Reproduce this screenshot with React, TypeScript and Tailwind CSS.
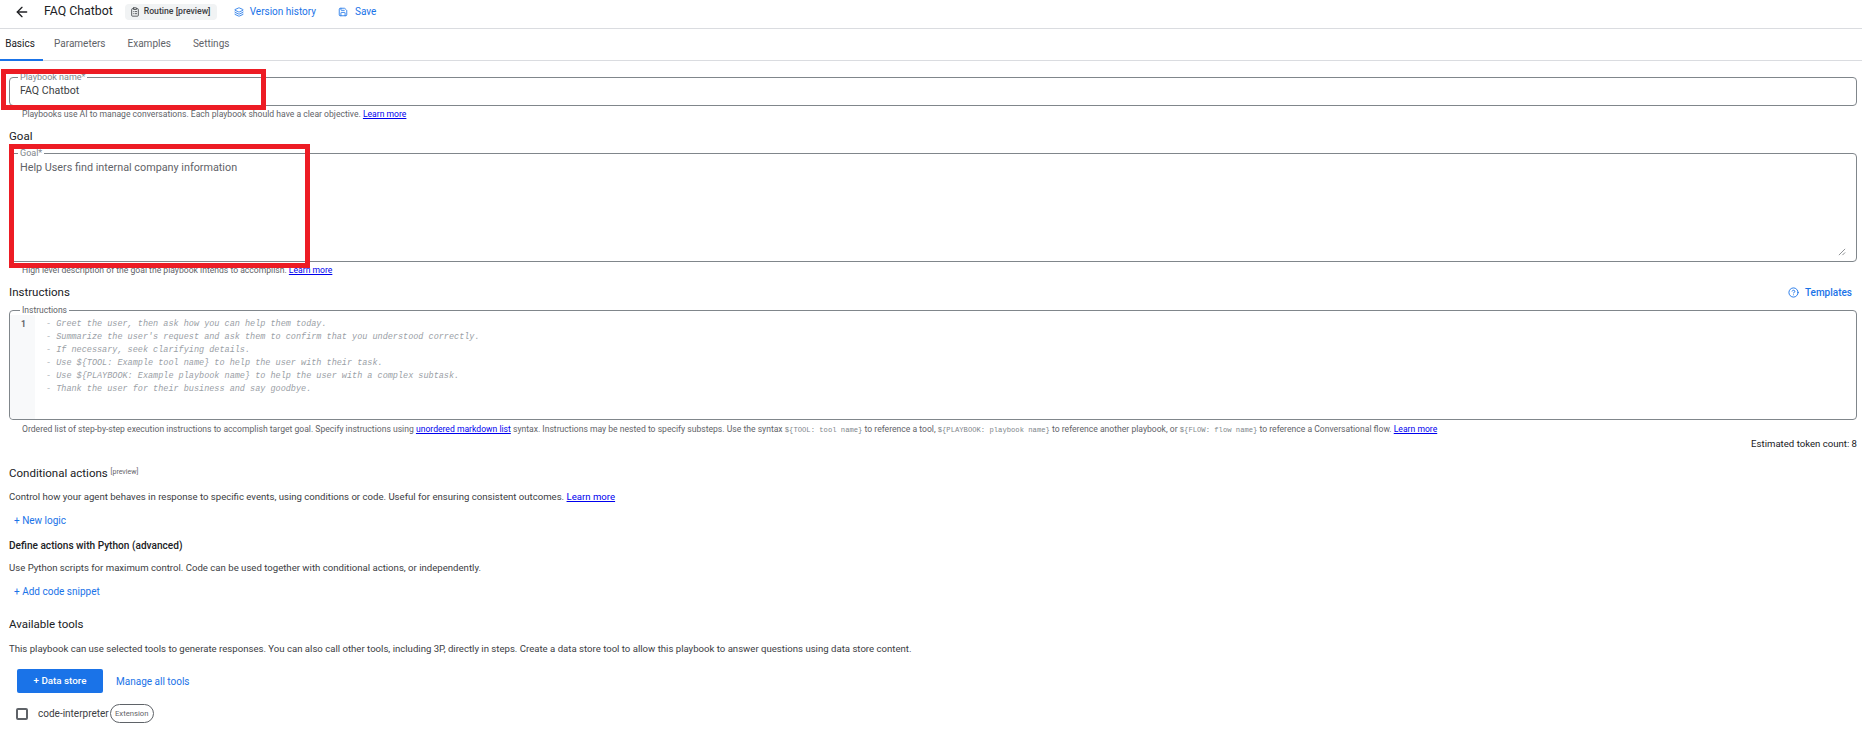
import { ArrowLeft, CircleHelp, ClipboardList, Layers, Save } from "lucide-react";

const tabs = ["Basics", "Parameters", "Examples", "Settings"];

const placeholder = [
  "- Greet the user, then ask how you can help them today.",
  "- Summarize the user's request and ask them to confirm that you understood correctly.",
  "- If necessary, seek clarifying details.",
  "- Use ${TOOL: Example tool name} to help the user with their task.",
  "- Use ${PLAYBOOK: Example playbook name} to help the user with a complex subtask.",
  "- Thank the user for their business and say goodbye.",
];

function LearnMore() {
  return <a className="text-[#0000ee] underline">Learn more</a>;
}

function Code({ children }: { children: string }) {
  return <span className="font-['Liberation_Mono',monospace] text-[7.2px] text-[#80868b]">{children}</span>;
}

function Heading({ children }: { children: React.ReactNode }) {
  return <h2 className="text-[11.5px] leading-4 text-[#202124]">{children}</h2>;
}

export default function App() {
  return (
    <div className="relative h-[731px] overflow-hidden bg-white font-['Roboto',sans-serif] text-[#3c4043]">
      {/* Top bar */}
      <header className="flex h-[29px] items-center border-b border-[#dadce0] pb-[5px] pl-[14px]">
        <ArrowLeft className="h-[16px] w-[16px] text-[#202124]" strokeWidth={2} />
        <span className="ml-[14px] text-[12.3px] text-[#202124]">FAQ Chatbot</span>
        <span className="ml-[12px] flex h-[16px] w-[92px] items-center gap-[4px] rounded bg-[#f1f3f4] pl-[5px] text-[8.7px] font-medium text-[#3c4043]">
          <ClipboardList className="h-[10px] w-[10px]" />
          Routine [preview]
        </span>
        <span className="ml-[17px] flex items-center gap-[6px] text-[10px] text-[#1a73e8]">
          <Layers className="h-[10px] w-[10px]" />
          Version history
        </span>
        <span className="ml-[22px] flex items-center gap-[7px] text-[10px] text-[#1a73e8]">
          <Save className="h-[10px] w-[10px]" />
          Save
        </span>
      </header>

      {/* Tabs */}
      <nav className="flex h-[32px] items-center gap-[22px] border-b border-[#dadce0] text-[10px] text-[#5f6368]">
        {tabs.map((tab, i) => (
          <span
            key={tab}
            className={
              i === 0
                ? "-mr-[11px] -mb-px flex h-full w-[43px] items-center justify-center border-b-2 border-[#1a73e8] pr-[3px] pb-[2px] text-[#202124]"
                : "pb-[2px]"
            }
          >
            {tab}
          </span>
        ))}
      </nav>

      <main className="flex flex-col pr-[5px] pl-[9px]">
        {/* Playbook name */}
        <fieldset className="mt-[12px] rounded border border-[#80868b] pl-[7px]">
          <legend className="ml-[1px] px-[2px] text-[9px] leading-[9px] text-[#80868b]">Playbook name*</legend>
          <div className="h-[23px] pl-[3px] text-[10.6px] leading-[18px] text-[#3c4043]">FAQ Chatbot</div>
        </fieldset>
        <p className="mt-[2px] pl-[13px] text-[8.6px] leading-[12px] text-[#5f6368]">
          Playbooks use AI to manage conversations. Each playbook should have a clear objective. <LearnMore />
        </p>

        {/* Goal */}
        <div className="mt-[8px]">
          <Heading>Goal</Heading>
        </div>
        <fieldset className="mt-[5px] rounded border border-[#80868b] pl-[7px]">
          <legend className="ml-[1px] px-[2px] text-[9px] leading-[9px] text-[#80868b]">Goal*</legend>
          <div className="relative h-[103px] pt-[1px] pl-[3px] text-[10.8px] leading-[18px] text-[#5f6368]">
            Help Users find internal company information
            <svg className="absolute right-[10px] bottom-[5px] h-[8px] w-[8px] text-[#5f6368]" viewBox="0 0 9 9">
              <path d="M1 8 8 1M5 8l3-3" stroke="currentColor" strokeWidth="0.8" fill="none" />
            </svg>
          </div>
        </fieldset>
        <p className="mt-[2px] pl-[13px] text-[8.6px] leading-[12px] text-[#5f6368]">
          High level description of the goal the playbook intends to accomplish. <LearnMore />
        </p>

        {/* Instructions */}
        <div className="mt-[8px] flex items-center justify-between">
          <Heading>Instructions</Heading>
          <span className="mr-[5px] flex items-center gap-[6px] text-[10px] font-medium text-[#1a73e8]">
            <CircleHelp className="h-[11px] w-[11px]" />
            Templates
          </span>
        </div>
        <fieldset className="mt-[6px] rounded border border-[#80868b]">
          <legend className="ml-[10px] px-[2px] text-[8.5px] leading-[9px] text-[#5f6368]">Instructions</legend>
          <div className="flex h-[104px]">
            <div className="w-[25px] rounded-bl bg-[#f8f9fa] pt-[3px] pl-[11px] text-[8.5px] leading-[13px] font-bold text-[#5f6368]">
              1
            </div>
            <div className="pt-[3px] pl-[11px] font-['Liberation_Mono',monospace] text-[8.5px] leading-[13px] text-[#9aa0a6] italic">
              {placeholder.map((line) => (
                <div key={line} className="whitespace-pre">
                  {line}
                </div>
              ))}
            </div>
          </div>
        </fieldset>
        <p className="mt-[3px] pl-[13px] text-[8.6px] leading-[12px] whitespace-nowrap text-[#5f6368]">
          Ordered list of step-by-step execution instructions to accomplish target goal. Specify instructions using{" "}
          <a className="text-[#0000ee] underline">unordered markdown list</a> syntax. Instructions may be nested to
          specify substeps. Use the syntax <Code>{"${TOOL: tool name}"}</Code> to reference a tool,{" "}
          <Code>{"${PLAYBOOK: playbook name}"}</Code> to reference another playbook, or{" "}
          <Code>{"${FLOW: flow name}"}</Code> to reference a Conversational flow. <LearnMore />
        </p>
        <div className="mt-[1px] text-right text-[9.6px] leading-[13px] text-[#202124]">Estimated token count: 8</div>

        {/* Conditional actions */}
        <div className="mt-[15px]">
          <Heading>
            Conditional actions <sup className="text-[7px] text-[#5f6368]">[preview]</sup>
          </Heading>
        </div>
        <p className="mt-[9px] text-[9.6px] leading-[13px] text-[#3c4043]">
          Control how your agent behaves in response to specific events, using conditions or code. Useful for ensuring
          consistent outcomes. <LearnMore />
        </p>
        <span className="mt-[11px] pl-[5px] text-[10px] leading-[13px] text-[#1a73e8]">+ New logic</span>
        <h3 className="mt-[12px] text-[10.1px] leading-[13px] font-medium text-[#202124]">
          Define actions with Python (advanced)
        </h3>
        <p className="mt-[9px] text-[9.6px] leading-[13px] text-[#3c4043]">
          Use Python scripts for maximum control. Code can be used together with conditional actions, or independently.
        </p>
        <span className="mt-[11px] pl-[5px] text-[10px] leading-[13px] text-[#1a73e8]">+ Add code snippet</span>

        {/* Available tools */}
        <div className="mt-[18px]">
          <Heading>Available tools</Heading>
        </div>
        <p className="mt-[10px] text-[9.6px] leading-[13px] text-[#3c4043]">
          This playbook can use selected tools to generate responses. You can also call other tools, including 3P,
          directly in steps. Create a data store tool to allow this playbook to answer questions using data store
          content.
        </p>
        <div className="mt-[14px] flex items-center pl-[8px]">
          <button className="h-[24px] w-[86px] rounded-[2px] bg-[#1a73e8] text-[9.8px] font-medium text-white">
            + Data store
          </button>
          <span className="ml-[13px] text-[10px] text-[#1a73e8]">Manage all tools</span>
        </div>
        <div className="mt-[11px] flex items-center pl-[7px]">
          <span className="h-[12px] w-[12px] rounded-[2px] border-2 border-[#5f6368]" />
          <span className="ml-[10px] text-[10px] text-[#3c4043]">code-interpreter</span>
          <span className="ml-[1px] flex h-[19px] w-[44px] items-center justify-center rounded-full border border-[#5f6368] text-[7.7px] text-[#5f6368]">
            Extension
          </span>
        </div>
      </main>

      {/* Red annotation boxes */}
      <div className="absolute top-[69px] left-[1px] h-[41px] w-[265px] border-[5px] border-[#ed1c24]" />
      <div className="absolute top-[144px] left-[9px] h-[124px] w-[301px] border-[5px] border-[#ed1c24]" />
    </div>
  );
}
